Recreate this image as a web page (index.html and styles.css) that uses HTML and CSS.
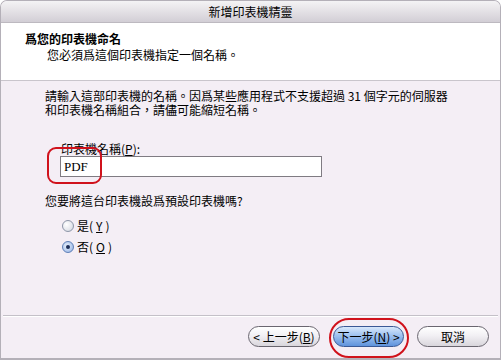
FILE: index.html
```html
<!DOCTYPE html>
<html lang="zh-Hant">
<head>
  <meta charset="UTF-8">
  <title>新增印表機精靈</title>
  <link rel="stylesheet" href="styles.css">
</head>
<body>
  <div class="window">
    <div class="titlebar">新增印表機精靈</div>
    <div class="header">
      <div class="heading">爲您的印表機命名</div>
      <div class="subheading">您必須爲這個印表機指定一個名稱。</div>
    </div>
    <div class="content">
      <div class="intro">
        <span class="intro-line">請輸入這部印表機的名稱。因爲某些應用程式不支援超過 31 個字元的伺服器</span>
        <span class="intro-line">和印表機名稱組合，請儘可能縮短名稱。</span>
      </div>
      <div class="field">
        <label class="field-label" for="name">印表機名稱(<u>P</u>):</label>
        <input id="name" class="textbox" type="text" value="PDF">
        <span class="mark-box"></span>
      </div>
      <p class="question">您要將這台印表機設爲預設印表機嗎?</p>
      <div class="options">
        <div class="option"><span class="radio"></span>是(<u>Y</u>)</div>
        <div class="option"><span class="radio checked"></span>否(<u>O</u>)</div>
      </div>
    </div>
    <div class="footer">
      <button class="btn">&lt; 上一步(<u>B</u>)</button>
      <button class="btn primary">下一步(<u>N</u>) &gt;<span class="mark-ring"></span></button>
      <button class="btn">取消</button>
    </div>
  </div>
</body>
</html>
```

FILE: styles.css
```css
* { box-sizing: border-box; }
body {
  margin: 0;
  background: #fff;
  font-family: "Noto Sans CJK TC", "Liberation Sans", sans-serif;
  font-size: 12px;
  color: #000;
}
.window {
  width: 501px;
  height: 360px;
  display: flex;
  flex-direction: column;
  border: 1px solid #b4b0b8;
  border-bottom-width: 2px;
  border-radius: 7px 7px 0 0;
  background: #f4eef5;
  overflow: hidden;
}
.titlebar {
  height: 22px;
  line-height: 22px;
  text-align: center;
  font-size: 12px;
  background: linear-gradient(#f4f3f5, #e0dde2 60%, #d2ced5);
  border-bottom: 1px solid #bdb9c0;
}
.header {
  height: 58px;
  background: #fff;
  border-bottom: 1px solid #c9c5cc;
  padding: 8px 0 0 24px;
}
.heading { font-weight: bold; line-height: 15px; }
.subheading { line-height: 15px; padding-left: 22px; margin-top: 1px; }
.content {
  flex: 1;
  padding: 8px 0 0 44px;
}
.intro { display: flex; flex-direction: column; gap: 1px; }
.intro-line { display: block; height: 13px; line-height: 13px; }
.field {
  position: relative;
  margin: 26px 0 0 16px;
  width: 262px;
}
.field-label { display: block; line-height: 14px; }
.textbox {
  display: block;
  width: 262px;
  height: 21px;
  margin: 0 0 0 -1px;
  padding: 0 3px;
  border: 1px solid #7f7b82;
  background: #fff;
  font-family: "Liberation Serif", serif;
  font-size: 13px;
  outline: none;
}
.mark-box {
  position: absolute;
  left: -14px;
  top: 5px;
  width: 55px;
  height: 37px;
  border: 2px solid #d0121c;
  border-radius: 9px;
}
.question { margin: 17px 0 0; line-height: 14px; }
.options { margin: 7px 0 0 17px; display: flex; flex-direction: column; }
.option { display: flex; align-items: center; gap: 3px; height: 21px; }
.radio {
  width: 12px;
  height: 12px;
  border-radius: 50%;
  border: 1px solid #8d96a8;
  background: radial-gradient(circle at 35% 35%, #fff, #e4e6ec 60%, #c8ccd6);
  display: flex;
  align-items: center;
  justify-content: center;
}
.radio.checked {
  border-color: #5f80b8;
  background: radial-gradient(circle at 40% 40%, #e8f0fc, #a9c2ea 70%, #6f93d0);
}
.radio.checked::after {
  content: "";
  width: 4px;
  height: 4px;
  border-radius: 50%;
  background: #1d2e58;
}
.footer {
  height: 43px;
  margin: 0 2px;
  border-top: 1px solid #c4c0c8;
  box-shadow: inset 0 1px 0 #fff;
  display: flex;
  justify-content: flex-end;
  align-items: flex-start;
  gap: 13px;
  padding: 10px 9px 0 0;
}
.btn {
  position: relative;
  width: 72px;
  height: 21px;
  padding: 0;
  border: 1px solid #6a6670;
  border-radius: 11px;
  background: linear-gradient(#ffffff, #f2f0f4 45%, #d9d6dc);
  font-family: inherit;
  font-size: 12px;
  color: #000;
  line-height: 19px;
}
.btn.primary {
  width: 71px;
  border-color: #3a5996;
  background: linear-gradient(#d8e8fb, #9ec2f0 45%, #5f93dc);
}
.mark-ring {
  position: absolute;
  left: -5px;
  top: -9px;
  width: 80px;
  height: 40px;
  border: 2px solid #d0121c;
  border-radius: 20px;
}
```
